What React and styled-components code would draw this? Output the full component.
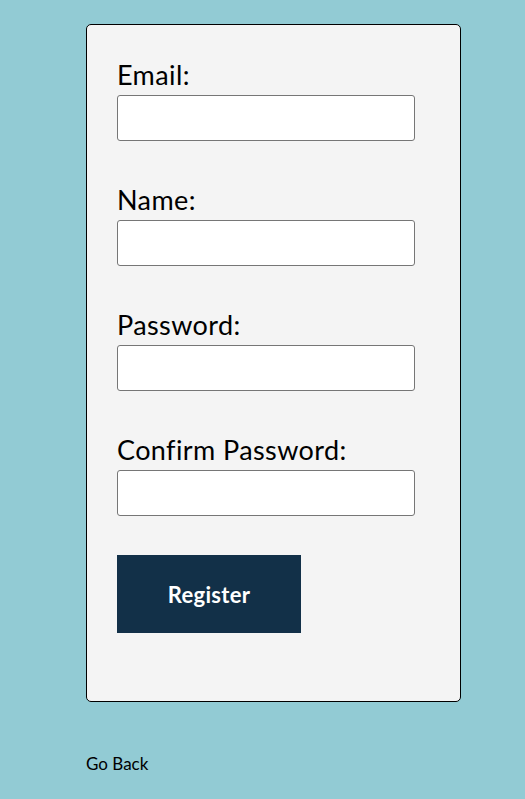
import React from 'react';
import styled, { createGlobalStyle } from 'styled-components';

const GlobalStyle = createGlobalStyle`
  body {
    margin: 0;
    background: #92cbd4;
    font-family: 'Lato', 'Open Sans', sans-serif;
    color: #000;
  }
`;

const Page = styled.div`
  padding: 24px 0 0 86px;
  min-height: 775px;
`;

// card holding the form
const Card = styled.form`
  width: 313px;
  padding: 34px 30px 68px 30px;
  background: #f4f4f4;
  border: 1px solid #000;
  border-radius: 5px;
`;

const Field = styled.div`
  margin-bottom: 43px;
  &:last-of-type {
    margin-bottom: 39px;
  }
`;

const Label = styled.label`
  display: block;
  font-size: 27px;
  line-height: 32px;
  letter-spacing: 0.4px;
  margin-bottom: 4px;
`;

const Input = styled.input`
  display: block;
  box-sizing: border-box;
  width: 298px;
  height: 46px;
  border: 1px solid #767676;
  border-radius: 3px;
  background: #fff;
  font-family: inherit;
  font-size: 16px;
`;

const Button = styled.button`
  width: 184px;
  height: 78px;
  border: none;
  background: #123048;
  color: #fff;
  font-family: inherit;
  font-size: 22px;
  font-weight: 700;
  letter-spacing: 0.3px;
  cursor: pointer;
`;

const BackLink = styled.a`
  display: inline-block;
  margin-top: 51px;
  font-size: 17px;
  color: #000;
  text-decoration: none;
`;

const fields = ['Email:', 'Name:', 'Password:', 'Confirm Password:'];

export default function App() {
  return (
    <>
      <GlobalStyle />
      <Page>
        <Card onSubmit={(e) => e.preventDefault()}>
          {fields.map((f) => (
            <Field key={f}>
              <Label>{f}</Label>
              <Input type={f.includes('Password') ? 'password' : 'text'} />
            </Field>
          ))}
          <Button type="submit">Register</Button>
        </Card>
        <BackLink href="#">Go Back</BackLink>
      </Page>
    </>
  );
}
